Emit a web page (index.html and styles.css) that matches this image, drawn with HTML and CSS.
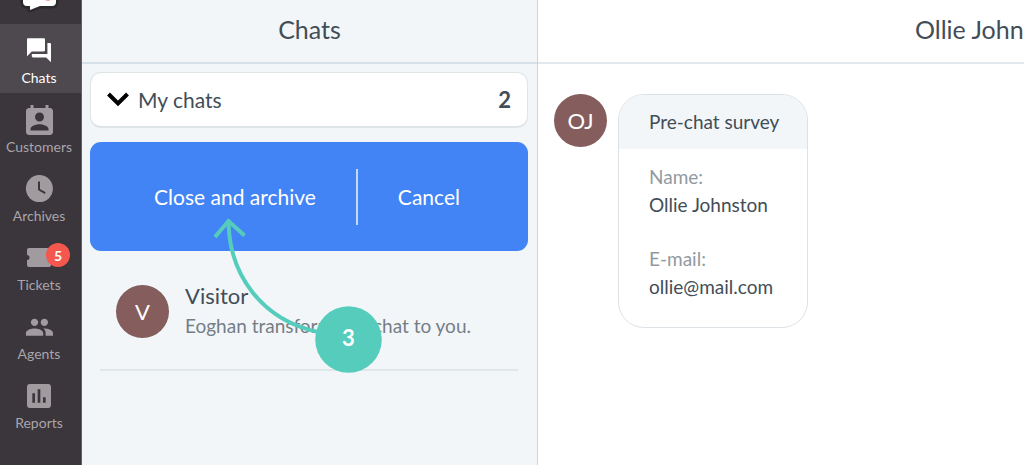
FILE: index.html
```html
<!DOCTYPE html>
<html lang="en">
<head>
<meta charset="utf-8">
<meta name="viewport" content="width=device-width, initial-scale=1">
<title>Chats</title>
<link rel="stylesheet" href="styles.css">
</head>
<body>
<div class="app">
  <nav class="sidebar" aria-label="Main">
    <div class="logo">
      <svg width="42" height="24" viewBox="0 0 42 24" aria-hidden="true">
        <path d="M4 -6V2Q4 6 8 6H11V10L21 6H33Q37 6 37 2V-6Z" fill="#fff" stroke="#2b2b2b" stroke-width="5" stroke-linejoin="round"/>
        <path d="M4 -6V2Q4 6 8 6H11V10L21 6H33Q37 6 37 2V-6Z" fill="#fff"/>
        <path d="M26 0Q29 2 32 0Z" fill="#f9a197"/>
      </svg>
    </div>
    <button class="nav-item active" type="button">
      <svg class="nav-icon" viewBox="0 0 30 30" aria-hidden="true"><path transform="translate(.6 .9) scale(1.2)" d="M21 6h-2v9H6v2c0 .55.45 1 1 1h11l4 4V7c0-.55-.45-1-1-1zm-4 6V3c0-.55-.45-1-1-1H3c-.55 0-1 .45-1 1v14l4-4h10c.55 0 1-.45 1-1z"/></svg>
      <span>Chats</span>
    </button>
    <button class="nav-item" type="button">
      <svg class="nav-icon" viewBox="0 0 30 30" aria-hidden="true"><path transform="translate(-2.5 -.5) scale(1.5)" d="M19 3h-1V1h-2v2H8V1H6v2H5c-1.11 0-2 .9-2 2v14c0 1.1.89 2 2 2h14c1.1 0 2-.9 2-2V5c0-1.1-.9-2-2-2zm-7 3c1.66 0 3 1.34 3 3s-1.34 3-3 3-3-1.34-3-3 1.34-3 3-3zm6 12H6v-1c0-2 4-3.1 6-3.1s6 1.1 6 3.1v1z"/></svg>
      <span>Customers</span>
    </button>
    <button class="nav-item" type="button">
      <svg class="nav-icon" viewBox="0 0 30 30" aria-hidden="true"><circle cx="15.4" cy="15.6" r="13.5"/><path d="M15 8.500V16.500L21.200 20.200" fill="none" stroke="#3b353c" stroke-width="2"/></svg>
      <span>Archives</span>
    </button>
    <button class="nav-item" type="button">
      <svg class="nav-icon" viewBox="0 0 30 30" aria-hidden="true"><path d="M5 6H25Q27 6 27 8V13A2.5 2.5 0 0 0 27 18V23Q27 25 25 25H5Q3 25 3 23V18A2.5 2.5 0 0 0 3 13V8Q3 6 5 6Z"/></svg>
      <span>Tickets</span>
      <span class="badge">5</span>
    </button>
    <button class="nav-item" type="button">
      <svg class="nav-icon" viewBox="0 0 30 30" aria-hidden="true"><path transform="translate(.7 1.5) scale(1.23)" d="M16 11c1.66 0 2.99-1.34 2.99-3S17.66 5 16 5c-1.66 0-3 1.34-3 3s1.34 3 3 3zm-8 0c1.66 0 2.99-1.34 2.99-3S9.66 5 8 5C6.34 5 5 6.34 5 8s1.34 3 3 3zm0 2c-2.33 0-7 1.17-7 3.5V19h14v-2.5c0-2.33-4.67-3.5-7-3.5zm8 0c-.29 0-.62.02-.97.05 1.16.84 1.97 1.97 1.97 3.45V19h6v-2.5c0-2.33-4.67-3.5-7-3.5z"/></svg>
      <span>Agents</span>
    </button>
    <button class="nav-item" type="button">
      <svg class="nav-icon" viewBox="0 0 30 30" aria-hidden="true"><path transform="translate(-1) scale(1.333)" d="M19 3H5c-1.1 0-2 .9-2 2v14c0 1.1.9 2 2 2h14c1.1 0 2-.9 2-2V5c0-1.100-.9-2-2-2zM9 17H7v-7h2v7zm4 0h-2V7h2v10zm4 0h-2v-4h2v4z"/></svg>
      <span>Reports</span>
    </button>
  </nav>

  <section class="chats">
    <h1 class="bar">Chats</h1>
    <div class="list">
      <button class="group" type="button">
        <svg width="22" height="18" viewBox="0 0 22 18" aria-hidden="true"><path d="M1.500 3L11 12.500L20.500 3" fill="none" stroke="#000" stroke-width="4"/></svg>
        <span class="group-name">My chats</span>
        <span class="count">2</span>
      </button>
      <div class="actions">
        <button class="action" type="button">Close and archive</button>
        <span class="divider"></span>
        <button class="action" type="button">Cancel</button>
      </div>
      <article class="chat">
        <span class="avatar">V</span>
        <div class="summary">
          <h2 class="visitor">Visitor</h2>
          <p class="preview">Eoghan transformed a chat to you.</p>
        </div>
      </article>
    </div>
    <div class="callout">
      <svg width="168" height="156" viewBox="214 217 168 156" aria-hidden="true">
        <g fill="none" stroke="#56cdbc" stroke-width="4">
          <path d="M228.500 221C229 275 262 320 318 332"/>
          <path d="M215 237L228.500 221L244.500 235.500"/>
        </g>
        <circle cx="348.500" cy="339.500" r="33.300" fill="#56cdbc"/>
      </svg>
      <span class="step">3</span>
    </div>
  </section>

  <main class="conversation">
    <h1 class="bar name-bar">Ollie Johnston</h1>
    <div class="message">
      <span class="avatar">OJ</span>
      <section class="survey">
        <h2 class="survey-title">Pre-chat survey</h2>
        <dl class="fields">
          <div><dt>Name:</dt><dd>Ollie Johnston</dd></div>
          <div><dt>E-mail:</dt><dd>ollie@mail.com</dd></div>
        </dl>
      </section>
    </div>
  </main>
</div>
</body>
</html>
```
FILE: styles.css
```css
* { box-sizing: border-box; }
body, h1, h2, p, dl, dd { margin: 0; }
h1, h2 { font-weight: 400; }
body {
  font-family: Lato, "Liberation Sans", sans-serif;
  color: #424d57;
  background: #fff;
  overflow: hidden;
}
button {
  border: 0;
  padding: 0;
  background: none;
  color: inherit;
  font: inherit;
  cursor: pointer;
}
.app { display: flex; min-height: 100vh; }

.sidebar {
  flex: 0 0 82px;
  display: flex;
  flex-direction: column;
  background: #3b353c;
  border-right: 1px solid #635e65;
}
.logo { height: 24px; padding-left: 19px; }
.nav-item {
  position: relative;
  display: flex;
  flex-direction: column;
  align-items: center;
  height: 69px;
  padding: 11px 3px 0 0;
  color: #a9a5aa;
  font-size: 14px;
  line-height: 25px;
}
.nav-item.active { background: #4e494f; color: #fff; }
.nav-icon { flex: none; width: 30px; height: 30px; overflow: visible; fill: #a19ba0; }
.active .nav-icon { fill: #fff; }
.badge {
  position: absolute;
  top: 12px;
  left: 46px;
  width: 24px;
  height: 24px;
  border-radius: 50%;
  background: #f4574d;
  color: #fff;
  font-weight: 700;
  text-align: center;
}

.bar {
  height: 64px;
  border-bottom: 2px solid #d6e0e8;
  font-size: 25px;
  line-height: 58px;
  text-align: center;
  white-space: nowrap;
}
.chats {
  position: relative;
  flex: 0 0 456px;
  background: #f2f6f9;
  border-right: 1px solid #cbd5de;
}
.list { padding: 8px 9px 0 8px; }
.group {
  display: flex;
  align-items: center;
  gap: 9px;
  width: 100%;
  height: 56px;
  padding: 0 16px;
  border: 1px solid #dfe4e7;
  border-bottom-width: 2px;
  border-radius: 11px;
  background: #fff;
  font-size: 21px;
}
.group-name { flex: 1; text-align: left; }
.count { font-size: 22px; font-weight: 700; }
.actions {
  display: flex;
  align-items: center;
  justify-content: center;
  gap: 40px;
  height: 109px;
  margin-top: 14px;
  padding-right: 4px;
  border-radius: 11px;
  background: #4284f5;
  color: #fff;
  font-size: 21px;
}
.divider { width: 2px; height: 56px; background: #c4dafc; }
.chat {
  display: flex;
  align-items: center;
  gap: 16px;
  margin: 0 10px;
  padding: 30px 16px 28px;
  border-bottom: 2px solid #e1e6e9;
}
.avatar {
  flex: none;
  width: 53px;
  height: 53px;
  border-radius: 50%;
  background: #845d5c;
  color: #fff;
  font-size: 22px;
  line-height: 53px;
  text-align: center;
}
.summary { white-space: nowrap; }
.visitor { font-size: 22px; line-height: 30px; }
.preview { font-size: 19px; line-height: 30px; color: #757e86; }

.callout { position: absolute; top: 217px; left: 132px; pointer-events: none; }
.callout svg { display: block; }
.step {
  position: absolute;
  right: 0;
  bottom: 0;
  width: 67px;
  color: #fff;
  font-size: 22px;
  font-weight: 700;
  line-height: 70px;
  text-align: center;
}

.conversation { flex: 1; min-width: 0; }
.name-bar { padding-left: 377px; border-color: #e3e8ec; text-align: left; overflow: hidden; }
.message { display: flex; align-items: flex-start; gap: 11px; padding: 30px 16px; }
.survey {
  width: 190px;
  border: 1px solid #dce2e5;
  border-radius: 26px;
  overflow: hidden;
}
.survey-title {
  padding-left: 30px;
  background: #f2f6f9;
  font-size: 19px;
  line-height: 54px;
}
.fields {
  display: grid;
  gap: 26px;
  padding: 14px 30px 26px;
  font-size: 19px;
  line-height: 28px;
}
.fields dt { color: #929aa1; }
```
